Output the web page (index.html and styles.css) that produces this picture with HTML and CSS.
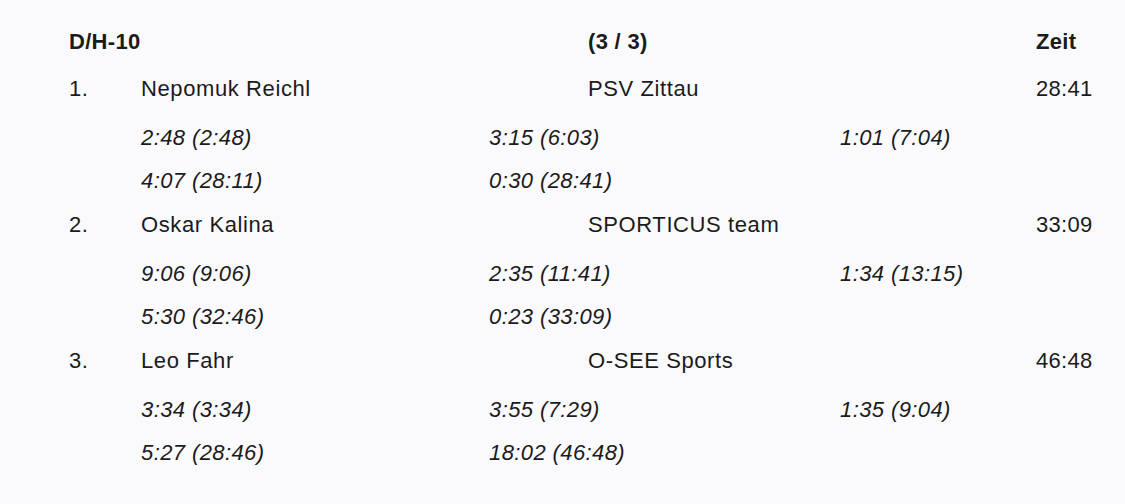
FILE: index.html
```html
<!DOCTYPE html>
<html lang="de">
<head>
<meta charset="utf-8">
<title>D/H-10</title>
<link rel="stylesheet" href="styles.css">
</head>
<body>
<div class="results">
  <div class="row head">
    <span class="rank">D/H-10</span>
    <span class="name"></span>
    <span class="club">(3 / 3)</span>
    <span class="time">Zeit</span>
  </div>

  <div class="group">
    <div class="row">
      <span class="rank">1.</span>
      <span class="name">Nepomuk Reichl</span>
      <span class="club">PSV Zittau</span>
      <span class="time">28:41</span>
    </div>
    <div class="splits">
      <span>2:48 (2:48)</span><span>3:15 (6:03)</span><span>1:01 (7:04)</span>
      <span>4:07 (28:11)</span><span>0:30 (28:41)</span>
    </div>
  </div>

  <div class="group">
    <div class="row">
      <span class="rank">2.</span>
      <span class="name">Oskar Kalina</span>
      <span class="club">SPORTICUS team</span>
      <span class="time">33:09</span>
    </div>
    <div class="splits">
      <span>9:06 (9:06)</span><span>2:35 (11:41)</span><span>1:34 (13:15)</span>
      <span>5:30 (32:46)</span><span>0:23 (33:09)</span>
    </div>
  </div>

  <div class="group">
    <div class="row">
      <span class="rank">3.</span>
      <span class="name">Leo Fahr</span>
      <span class="club">O-SEE Sports</span>
      <span class="time">46:48</span>
    </div>
    <div class="splits">
      <span>3:34 (3:34)</span><span>3:55 (7:29)</span><span>1:35 (9:04)</span>
      <span>5:27 (28:46)</span><span>18:02 (46:48)</span>
    </div>
  </div>
</div>
</body>
</html>
```

FILE: styles.css
```css
html, body {
  margin: 0;
  padding: 0;
  background: #fafafd;
}

body {
  font-family: "Liberation Sans", Arial, Helvetica, sans-serif;
  font-size: 22px;
  letter-spacing: 0.6px;
  color: #1b1b1b;
}

.results {
  padding: 19px 0 0 69px;
}

.row {
  display: grid;
  grid-template-columns: 72px 447px 448px 1fr;
  line-height: 45px;
  height: 45px;
  white-space: nowrap;
}

.time {
  letter-spacing: 0.3px;
}

.head {
  font-weight: bold;
  letter-spacing: 0.3px;
  margin-bottom: 2px;
}

.splits {
  display: grid;
  grid-template-columns: 348px 351px 1fr;
  margin: 5px 0 0 72px;
  line-height: 43px;
  font-style: italic;
  letter-spacing: 0.4px;
  white-space: nowrap;
}
```
